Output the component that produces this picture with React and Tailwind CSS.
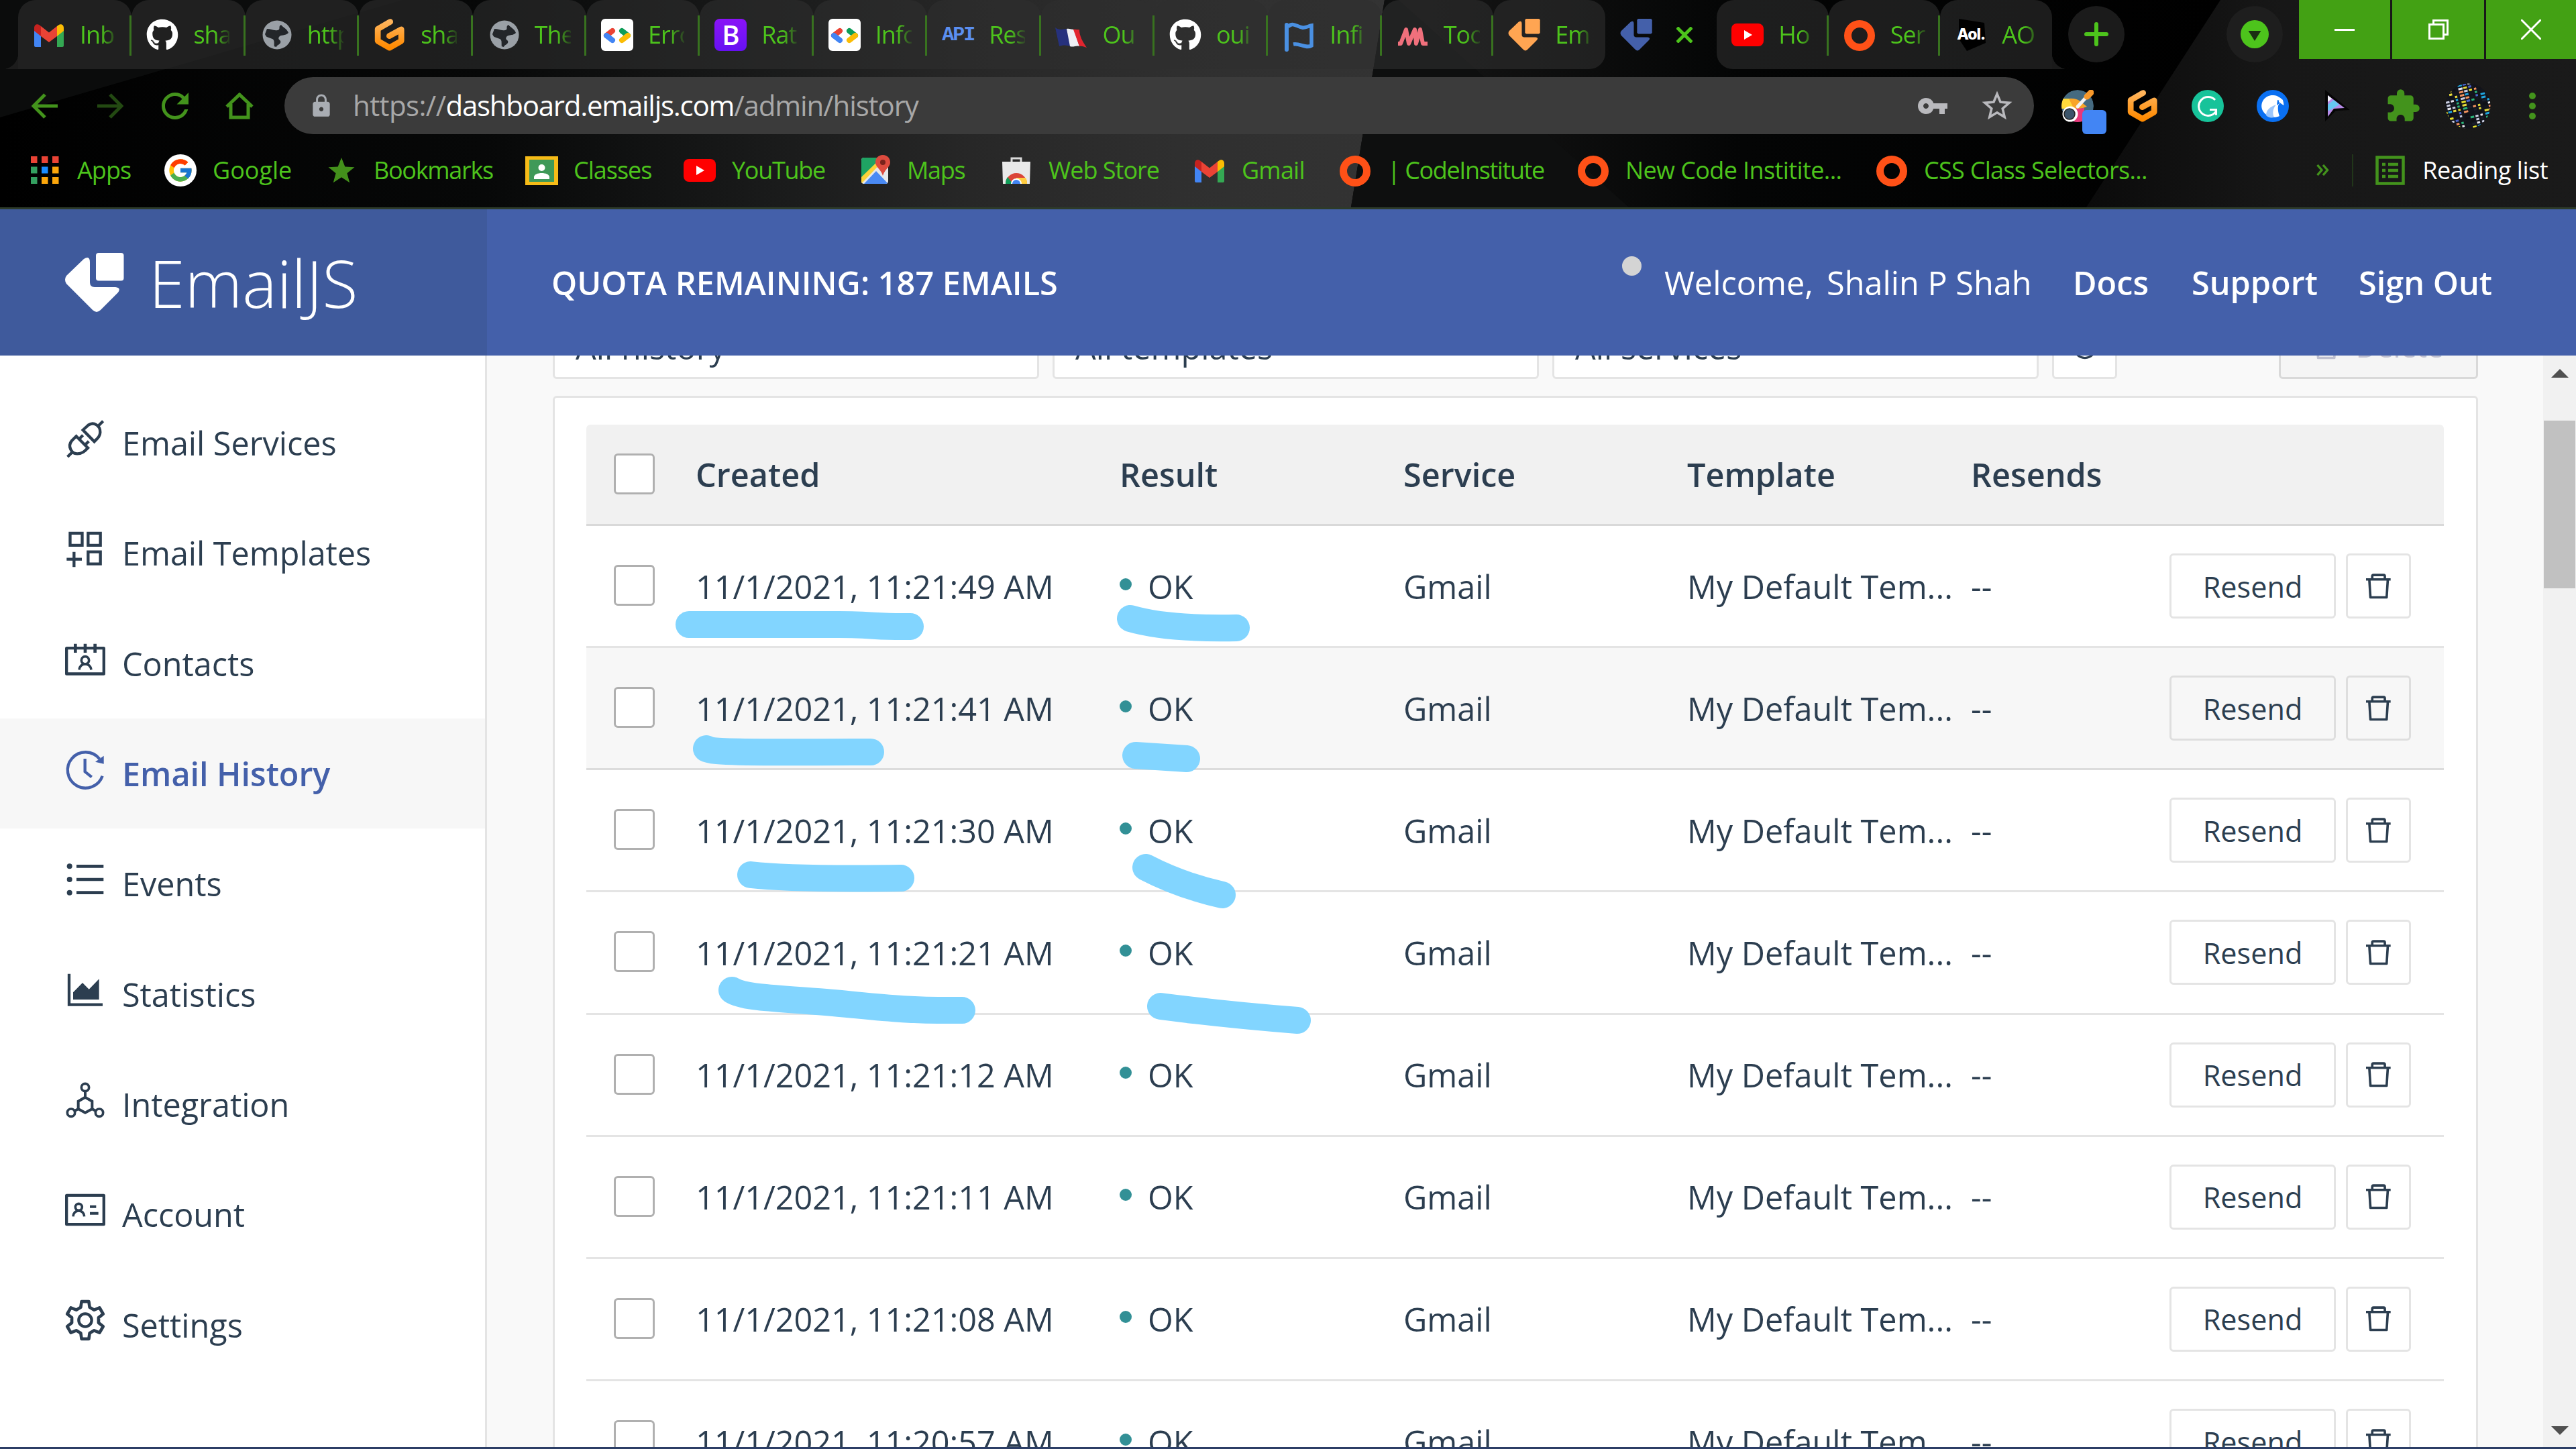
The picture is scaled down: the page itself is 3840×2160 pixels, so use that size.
import React from "react";
import { FaGithub } from "react-icons/fa";
import { FcGoogle } from "react-icons/fc";
import { AiOutlineReload } from "react-icons/ai";
import { MdRefresh, MdVpnKey, MdStarBorder, MdExtension, MdLock } from "react-icons/md";

/* ---------- favicons (48 x 48) ---------- */

const Svg = ({ children, box = "0 0 48 48", cls = "size-12" }) => (
  <svg viewBox={box} className={`${cls} shrink-0 overflow-visible`} fill="none">{children}</svg>
);

const Gmail = () => (
  <Svg>
    <path d="M2 12v28a2 2 0 0 0 2 2h8V21L2 13z" fill="#4285f4" />
    <path d="M46 12v28a2 2 0 0 1-2 2h-8V21l10-8z" fill="#34a853" />
    <path d="M36 11l2-1.500c4-3 8-.5 8 4V18l-10 8z" fill="#fbbc04" />
    <path d="M12 26V11l12 9.500L36 11v15l-12 9z" fill="#ea4335" />
    <path d="M2 18v-4.500c0-4.500 4-7 8-4l2 1.500v15z" fill="#c5221f" />
  </Svg>
);
const Github = () => <FaGithub className="size-12 shrink-0 text-white" />;
const Globe = () => (
  <Svg>
    <circle cx="25" cy="24" r="21.500" fill="#9aa0a6" />
    <path d="M10 15c6 0 9 3 16 2 5-1 0-6 5-8 3 4 9 6 11 12-5 5-11 2-14 6-3 5 4 4 2 9-2 3-5 3-6 6l-4-1c0-5 1-8-3-9-5-1-8-5-10-9z" fill="#23262a" />
    <path d="M7 26l11 4c4 2 2 6 3 12C13 40 8 34 7 26zM27 9c-3-1-6 0-7 4 4 2 8 0 7-4z" fill="#9aa0a6" />
  </Svg>
);
const Gitpod = () => (
  <Svg box="360 98 148 148">
    <defs>
      <linearGradient id="gp" x1="0" y1="0" x2="0" y2="1">
        <stop offset="0" stopColor="#ffb45b" /><stop offset="1" stopColor="#ff8a00" />
      </linearGradient>
    </defs>
    <path d="M436 112L379 145V200L433 231L487 200V147L432 177" stroke="url(#gp)" strokeWidth="27" strokeLinecap="round" strokeLinejoin="round" />
  </Svg>
);
const DevSite = () => (
  <Svg>
    <rect width="48" height="48" rx="6" fill="#fff" />
    <g strokeWidth="8" strokeLinecap="round">
      <path d="M17 18l-9 7" stroke="#ea4335" />
      <path d="M8 25l9 7" stroke="#4285f4" />
      <path d="M31 18l9 7" stroke="#0f9d58" />
      <path d="M40 25l-9 7" stroke="#fbbc04" />
    </g>
  </Svg>
);
const Bootstrap = () => (
  <span className="flex size-12 shrink-0 items-center justify-center rounded-lg bg-linear-to-b from-[#8a12f7] to-[#6610f2] text-[40px] leading-none font-semibold text-white">B</span>
);
const ApiMark = () => (
  <span className="flex size-12 shrink-0 items-center justify-center font-['Liberation_Mono',monospace] text-[30px] leading-none font-bold tracking-[-2px] text-[#5b8ff0]">API</span>
);
const FrenchFlag = () => (
  <Svg>
    <path d="M-1 13c5 4 11 3 17 2l6 26c-6-2-12-2-17 0z" fill="#26317d" />
    <path d="M16 15c4-1 7 1 11 1l8 25c-4-2-9 2-14 0z" fill="#eef0f5" />
    <path d="M26 16c3-1 6 1 9 0 0 10 5 18 11 27-4-1-7-3-11-2z" fill="#e2252f" />
  </Svg>
);
const BlueFlag = () => (
  <Svg>
    <path d="M6 46V9" stroke="#4a90e2" strokeWidth="6" strokeLinecap="round" />
    <path d="M8 12c7-8 13 0 21 1 5 1 9-2 14-3v30c-9 5-17-4-27-2" stroke="#4a90e2" strokeWidth="5.500" />
  </Svg>
);
const PinkM = () => (
  <Svg><path d="M2 37h4l8-21 4 21 9-21 2 21 6-21 4 21h7" stroke="#f0707c" strokeWidth="6" strokeLinejoin="round" /></Svg>
);
const EmailLogo = ({ cls, fill }) => (
  <svg viewBox="96 377 89 89" className={`${cls} shrink-0`} fill={fill}>
    <rect x="143" y="377" width="41.500" height="41.500" rx="4" />
    <path d="M125 386Q134 380 134 391V421Q134 428 141 428H172Q181 429 176 436L150 462Q144 468 138 462L99 423Q95 417 99 411Z" />
  </svg>
);
const OrangeMark = () => <EmailLogo cls="size-12" fill="#ffa552" />;
const BlueMark = () => <EmailLogo cls="size-12" fill="#4460aa" />;
const Youtube = () => (
  <Svg>
    <rect x="0" y="7" width="48" height="34" rx="8" fill="#ff0000" />
    <path d="M19 17v14l12-7z" fill="#fff" />
  </Svg>
);
const Ring = () => <Svg><circle cx="24" cy="25" r="17.500" stroke="#ff5117" strokeWidth="11" /></Svg>;
const Aol = () => (
  <span className="relative flex size-12 shrink-0 items-center justify-center">
    <svg viewBox="0 0 48 48" className="absolute inset-0 size-12"><path d="M6 0l38 6 2 30-28 12L6 30z" fill="#000" /></svg>
    <span className="relative font-['Inter',sans-serif] text-[23px] leading-none font-extrabold tracking-[-1px] text-white">Aol.</span>
  </span>
);
const AppsGrid = () => (
  <Svg>
    {["#ea4335", "#ea4335", "#ea4335", "#34a060", "#1a8cff", "#fba60b", "#34a060", "#fba60b", "#fba60b"].map((c, i) => (
      <rect key={i} x={3 + (i % 3) * 16} y={3 + Math.floor(i / 3) * 15.5} width="9.500" height="10" fill={c} />
    ))}
  </Svg>
);
const Google = () => (
  <span className="flex size-12 shrink-0 items-center justify-center rounded-full bg-white"><FcGoogle className="size-10" /></span>
);
const Star = () => (
  <Svg><path d="M24 5l5.300 13.500 14.200.7-11.100 9 3.800 14L24 34.200 11.800 42.200l3.800-14-11.100-9 14.200-.7z" fill="#43901b" /></Svg>
);
const Classroom = () => (
  <Svg>
    <rect x="0" y="3" width="49" height="43" fill="#f6bb17" />
    <rect x="6" y="8" width="37" height="33" fill="#3f9958" />
    <circle cx="24.500" cy="20" r="5" fill="#fff" />
    <path d="M13 34c0-8 23-8 23 0v3H13z" fill="#fff" />
  </Svg>
);
const Maps = () => (
  <Svg>
    <defs><clipPath id="mp"><rect x="4" y="5" width="40" height="39" rx="4" /></clipPath></defs>
    <g clipPath="url(#mp)">
      <rect x="4" y="5" width="40" height="39" fill="#e6e8ea" />
      <path d="M4 5h30L4 36z" fill="#1fa463" />
      <path d="M8 44l18-19 18 19z" fill="#4a8af4" />
      <path d="M4 34l30-29h7L4 44z" fill="#fdd23a" />
    </g>
    <path d="M36 1c7 0 11 5 11 11 0 7-8 10-11 20-3-10-11-13-11-20C25 6 29 1 36 1z" fill="#dd4b3e" />
    <circle cx="36" cy="12" r="4" fill="#7a231c" />
  </Svg>
);
const WebStore = () => (
  <Svg>
    <path d="M17 12V6h14v6" stroke="#dadada" strokeWidth="3" />
    <path d="M3 11h42l-1 33H4z" fill="#e9e9e9" />
    <path d="M8 44a16 16 0 0 1 32 0z" fill="#db4437" />
    <path d="M8 44a16 16 0 0 1 3-10l8 10z" fill="#0f9d58" />
    <path d="M40 44a16 16 0 0 0-2-9H24v9z" fill="#ffcd40" />
    <path d="M16 44a8 8 0 1 1 16 0z" fill="#fff" />
    <path d="M18 44a6 6 0 1 1 12 0z" fill="#4285f4" />
  </Svg>
);

/* ---------- browser chrome ---------- */

const TABS = [
  [Gmail, "Inb"], [Github, "sha"], [Globe, "http"], [Gitpod, "sha"], [Globe, "The"], [DevSite, "Erro"],
  [Bootstrap, "Rat"], [DevSite, "Info"], [ApiMark, "Res"], [FrenchFlag, "Ou"], [Github, "oui"], [BlueFlag, "Infi"],
];
const TABS_END = [[PinkM, "Too"], [OrangeMark, "Em"]];
const TABS_AFTER = [[Youtube, "Ho"], [Ring, "Ser"], [Aol, "AO"]];

function Tab({ Icon, label, width, shape = "", sep = true }) {
  return (
    <div className={`relative flex h-[103px] shrink-0 items-center rounded-t-[26px] bg-[#2f2f2f]/60 pl-[22px] ${width} ${shape}`}>
      <Icon />
      <span className="ml-[22px] w-[54px] overflow-hidden text-[36px] leading-[50px] tracking-[-1px] whitespace-nowrap text-[#4dc41c] [mask-image:linear-gradient(to_right,black_60%,rgb(0_0_0/0.15))]">{label}</span>
      {sep && <span className="absolute top-[23px] right-0 h-[60px] w-[3px] bg-[#38721f]" />}
    </div>
  );
}

function WindowButtons() {
  return (
    <div className="flex h-[88px] w-[413px] shrink-0 gap-[3px]">
      <div className="flex w-[136px] items-center justify-center bg-[#43a114]"><span className="h-[3px] w-[30px] bg-white" /></div>
      <div className="flex w-[137px] items-center justify-center bg-[#43a114]">
        <svg viewBox="0 0 30 30" className="size-[30px]" fill="none" stroke="#fff" strokeWidth="3">
          <path d="M1.500 7.500h21v21h-21zM7.500 7.500v-6h21v21h-6" />
        </svg>
      </div>
      <div className="flex flex-1 items-center justify-center bg-[#43a114]">
        <svg viewBox="0 0 30 30" className="size-[30px]" stroke="#fff" strokeWidth="3"><path d="M0 0l30 30M30 0L0 30" /></svg>
      </div>
    </div>
  );
}

function TabStrip() {
  return (
    <div className="flex h-[103px] items-start">
      <div className="h-[103px] w-[27px] shrink-0 pt-[79px] pl-[3px]">
        <div className="size-6 bg-[radial-gradient(circle_at_0_0,transparent_24px,#1c1c1c_24.500px)]" />
      </div>
      {TABS.map(([Icon, label], i) => <Tab key={i} Icon={Icon} label={label} width="w-[169.4px]" />)}
      {TABS_END.map(([Icon, label], i) => (
        <Tab key={i} Icon={Icon} label={label} width="w-[166.5px]" sep={i === 0} shape={i === 1 ? "rounded-br-[24px]" : ""} />
      ))}
      <div className="flex h-[103px] w-[166.5px] shrink-0 items-center pl-[22px]">
        <BlueMark />
        <svg viewBox="0 0 24 24" className="ml-[36px] size-6" stroke="#4dc41c" strokeWidth="5"><path d="M1 1l22 22M23 1L1 23" /></svg>
      </div>
      {TABS_AFTER.map(([Icon, label], i) => (
        <Tab key={i} Icon={Icon} label={label} width="w-[166.5px]" sep={i < 2} shape={i === 0 ? "rounded-bl-[24px]" : ""} />
      ))}
      <div className="mt-[79px] size-6 shrink-0 bg-[radial-gradient(circle_at_100%_0,transparent_24px,#1a1a1a_24.500px)]" />
      <div className="mt-[9px] flex size-[84px] shrink-0 items-center justify-center rounded-full bg-[#1b1b1b]">
        <svg viewBox="0 0 36 36" className="size-9" stroke="#4dc41c" strokeWidth="6" strokeLinecap="round"><path d="M18 3v30M3 18h30" /></svg>
      </div>
      <div className="mt-[9px] ml-[152px] flex size-[84px] shrink-0 items-center justify-center rounded-full bg-[#1e1e1e]">
        <span className="flex size-[42px] items-center justify-center rounded-full bg-[#4dc41c]">
          <svg viewBox="0 0 20 16" className="mt-1 h-[15px] w-[20px]" fill="#1a2f12"><path d="M0 0h20l-10 16z" /></svg>
        </span>
      </div>
      <div className="flex-1" />
      <WindowButtons />
    </div>
  );
}

const ColorPick = () => (
  <span className="relative size-12 shrink-0">
    <svg viewBox="0 0 48 48" className="size-12" fill="none">
      <defs><clipPath id="cp"><circle cx="24" cy="24" r="24" /></clipPath></defs>
      <g clipPath="url(#cp)">
        <circle cx="24" cy="24" r="24" fill="#456a80" />
        <path d="M2 13h17l5 15H0V20z" fill="#ffd93b" />
        <path d="M11 13q10-1 17 4l10 8-18 6z" fill="#f8a428" />
        <path d="M22 28l12-1v21H18z" fill="#e8387a" />
      </g>
      <circle cx="13" cy="36" r="11.500" fill="#fff" />
      <circle cx="12" cy="36" r="8" fill="#3c556b" stroke="#222" strokeWidth="1.500" />
      <path d="M24 25L36 12" stroke="#f3f3f3" strokeWidth="5" strokeLinecap="round" />
      <path d="M38 10l6-6" stroke="#f8992b" strokeWidth="9" strokeLinecap="round" />
    </svg>
    <span className="absolute top-[30px] left-[31px] size-[36px] rounded-[6px] bg-[#4285f4]" />
  </span>
);
const Grammarly = () => (
  <Svg>
    <circle cx="24" cy="24" r="24" fill="#17c39a" />
    <path d="M35 15A14 14 0 1 0 37 31M27 29.500h9.500v8" stroke="#fff" strokeWidth="3" />
  </Svg>
);
const Hawk = () => (
  <Svg>
    <circle cx="24" cy="24" r="24" fill="#0a70f2" />
    <path d="M9 31C3 18 14 7 25 8c7 0 9 4 14 8l2 7c-4-4-8-4-9 1s1 13 2 15c-8 4-20 1-25-8z" fill="#fff" />
    <path d="M31 15l-1 8 4-3 7 3c-3-5-5-7-10-8z" fill="#0a70f2" />
    <path d="M33 18l7 5-1-8-5-4z" fill="#fff" />
    <path d="M14 38c0-8 6-13 15-16-5 6-6 13-3 19-5 1-9 0-12-3z" fill="#9cc6fb" />
  </Svg>
);
const Cursor = () => (
  <Svg>
    <path d="M5 0v47l16-16 21-1z" fill="#050505" />
    <path d="M9 8v32l9-12 16-1z" fill="#b78be8" />
    <path d="M9 22l9-7 8 7-15 9-2-1z" fill="#65c7f2" />
    <path d="M9 8l6 5-6 5z" fill="#f4f4fb" />
  </Svg>
);

const AVATAR_COLORS = ["#c9cde0", "#15171f", "#e8e32a", "#1b1f2c", "#4a63c8", "#0f1015", "#f2925e", "#e8e8f0", "#2bb57a", "#1fa6e0", "#14161d", "#e8dc3a", "#12131a"];
const Avatar = () => (
  <svg viewBox="0 0 68 68" className="size-[68px] shrink-0">
    <defs><clipPath id="av"><circle cx="34" cy="34" r="33.500" /></clipPath></defs>
    <g clipPath="url(#av)">
      <rect width="68" height="68" fill="#12141c" />
      <g transform="rotate(-14 34 34)">
        {Array.from({ length: 216 }, (_, i) => (
          <rect key={i} x={-12 + (i % 12) * 7.6} y={-10 + Math.floor(i / 12) * 5} width={3.5 + ((i * 7) % 4)} height="3" fill={AVATAR_COLORS[(i * 5 + Math.floor(i / 12) * 3 + ((i * i) % 7)) % 13]} />
        ))}
      </g>
    </g>
  </svg>
);

function Toolbar() {
  return (
    <div className="flex h-[109px] items-center">
      <svg viewBox="0 0 40 38" className="ml-[47px] h-[38px] w-10 shrink-0" fill="none" stroke="#43931c" strokeWidth="5"><path d="M39 19H4M20 2L3 19l17 17" /></svg>
      <svg viewBox="0 0 40 38" className="ml-[57px] h-[38px] w-10 shrink-0" fill="none" stroke="#234912" strokeWidth="5"><path d="M1 19h35M20 2l17 17-17 17" /></svg>
      <MdRefresh className="ml-[47px] size-[60px] shrink-0 text-[#43931c]" />
      <svg viewBox="0 0 42 40" className="ml-[45px] h-10 w-[42px] shrink-0" fill="none" stroke="#43931c" strokeWidth="5"><path d="M2 21L21 3l19 18M8 17v20h26V17" /></svg>
      <div className="ml-[46px] flex h-[85px] w-[2608px] shrink-0 items-center rounded-full bg-[#3b3b3b] pl-[36px]">
        <MdLock className="size-[38px] shrink-0 text-[#a9adb3]" />
        <div className="mb-[2px] ml-[28px] flex text-[42px] leading-[60px] text-[#a8a8a8]">
          <span className="tracking-[-0.6px]">https://</span>
          <span className="tracking-[-1.25px] text-white">dashboard.emailjs.com</span>
          <span className="tracking-[-1.1px]">/admin/history</span>
        </div>
        <div className="flex-1" />
        <MdVpnKey className="size-12 shrink-0 text-[#b9b9bd]" />
        <MdStarBorder className="mr-[28px] ml-[45px] size-[54px] shrink-0 text-[#b9b9bd]" />
      </div>
      <div className="ml-[41px] flex items-center gap-[49px]">
        <ColorPick /><Gitpod /><Grammarly /><Hawk /><Cursor />
      </div>
      <MdExtension className="ml-[46px] size-[54px] shrink-0 text-[#43931c]" />
      <div className="ml-[36px]"><Avatar /></div>
      <div className="ml-[57px] flex flex-col gap-[5px]">
        {[0, 1, 2].map((i) => <span key={i} className="size-[10px] rounded-full bg-[#43931c]" />)}
      </div>
    </div>
  );
}

const BOOKMARKS = [
  [AppsGrid, "Apps", "w-[202px]", "tracking-[-0.9px]"],
  [Google, "Google", "w-[240px]", "tracking-[0px]"],
  [Star, "Bookmarks", "w-[298px]", "tracking-[-1.3px]"],
  [Classroom, "Classes", "w-[236px]", "tracking-[-1px]"],
  [Youtube, "YouTube", "w-[261px]", "tracking-[-1.3px]"],
  [Maps, "Maps", "w-[211px]", "tracking-[-1.3px]"],
  [WebStore, "Web Store", "w-[288px]", "tracking-[-1px]"],
  [Gmail, "Gmail", "w-[217px]", "tracking-[-0.8px]"],
  [Ring, "| CodeInstitute", "w-[355px]", "tracking-[-1.4px]"],
  [Ring, "New Code Institite...", "w-[445px]", "tracking-[-0.6px]"],
  [Ring, "CSS Class Selectors...", "w-[410px]", "tracking-[-0.7px]"],
];

function BookmarksBar() {
  return (
    <div className="flex h-[97px] items-center pb-[14px] pl-[43px] text-[36px] leading-[50px] whitespace-nowrap text-[#4dc41c]">
      {BOOKMARKS.map(([Icon, label, width, tracking]) => (
        <div key={label} className={`flex shrink-0 items-center ${width}`}>
          <Icon />
          <span className={`ml-[24px] ${tracking}`}>{label}</span>
        </div>
      ))}
      <div className="flex-1" />
      <svg viewBox="0 0 20 18" className="h-[17px] w-5 shrink-0" fill="none" stroke="#43931c" strokeWidth="3.500"><path d="M2 1l7 8-7 8M11 1l7 8-7 8" /></svg>
      <span className="ml-[34px] h-12 w-[2px] bg-[#21361a]" />
      <svg viewBox="0 0 44 44" className="ml-[33px] size-11 shrink-0" fill="none" stroke="#43931c" strokeWidth="4.500">
        <path d="M2.500 2.500h39v39h-39z" /><path d="M10 13h5M19 13h15M10 22h5M19 22h15M10 31h5M19 31h15" />
      </svg>
      <span className="mr-[42px] ml-[26px] tracking-[-0.5px] text-white">Reading list</span>
    </div>
  );
}

function ThemeBackdrop() {
  return (
    <svg viewBox="0 0 3840 309" className="absolute inset-0 h-[309px] w-[3840px]" preserveAspectRatio="none">
      <defs>
        <linearGradient id="bgA" x1="0" x2="1"><stop offset="0" stopColor="#000" /><stop offset=".35" stopColor="#070808" /><stop offset=".55" stopColor="#191a1a" /><stop offset=".7" stopColor="#272727" /><stop offset=".85" stopColor="#2f2f2f" /><stop offset="1" stopColor="#333" /></linearGradient>
        <linearGradient id="bgB" x1="0" x2="1"><stop offset="0" stopColor="#181818" /><stop offset=".45" stopColor="#040505" /><stop offset="1" stopColor="#000" /></linearGradient>
        <linearGradient id="bgC" x1="0" x2="1"><stop offset="0" stopColor="#0b0b0b" /><stop offset=".4" stopColor="#171717" /><stop offset="1" stopColor="#1a1a1a" /></linearGradient>
      </defs>
      <rect width="3840" height="309" fill="#000" />
      <path d="M0 0H2064L2014 309H0z" fill="url(#bgA)" />
      <path d="M0 0H600L0 175z" fill="#0b0c0c" />
      <path d="M2064 0H3310L3110 309H2014z" fill="url(#bgB)" />
      <path d="M2064 0H2085L2428 309H2014z" fill="#0e0f0f" />
      <path d="M3310 0H3840V309H3110z" fill="url(#bgC)" />
    </svg>
  );
}

/* ---------- sidebar ---------- */

const NavSvg = ({ children }) => (
  <svg viewBox="0 0 180 180" className="size-[60px] overflow-visible" fill="none" stroke="currentColor" strokeWidth="13">{children}</svg>
);
const PlugIcon = () => (
  <NavSvg>
    <path d="M11 168l22-22M50 76L30 96c-20 24-2 60 26 58 20 0 30-10 46-26zM60 91l20-20M86 118l20-20M80 48l24-22c24-16 54 2 53 32 0 16-8 24-26 42zM148 30l22-22" />
  </NavSvg>
);
const TemplatesIcon = () => (
  <NavSvg><path d="M22.500 17.500h54v54h-54zM103 17.500h55v54h-55zM103 101h55v54h-55zM7 134h68M40 101v68" /></NavSvg>
);
const ContactsIcon = () => (
  <NavSvg>
    <rect x="6.500" y="36.500" width="167" height="115" rx="1" />
    <path d="M46 17v40M90 17v40M134 17v40" strokeWidth="14" />
    <circle cx="90" cy="91" r="17" strokeWidth="11" />
    <path d="M63 133c3-18 14-25 27-25s24 7 27 25" strokeWidth="11" />
  </NavSvg>
);
const HistoryIcon = () => (
  <NavSvg>
    <path d="M167 116A80 80 0 1 1 154 40" />
    <path d="M89 39v58l30 24" />
    <path d="M173 26v36l-38-9z" fill="currentColor" stroke="none" />
  </NavSvg>
);
const EventsIcon = () => (
  <NavSvg>
    <path d="M51 28h121M51 87h121M51 146h121" strokeWidth="14" />
    {[28, 87, 146].map((y) => <circle key={y} cx="20" cy={y} r="12" fill="currentColor" stroke="none" />)}
  </NavSvg>
);
const StatsIcon = () => (
  <NavSvg>
    <path d="M18 14v138h150" />
    <path d="M36 129V97l42-43 29 29 45-46v92z" fill="currentColor" stroke="none" />
  </NavSvg>
);
const IntegrationIcon = () => (
  <NavSvg>
    <path d="M90 47v25M61 125l-18 10M119 125l18 10" strokeWidth="12" />
    <path d="M90 74l31 18v34l-31 17-31-17V92z" strokeWidth="12" />
    <circle cx="90" cy="30" r="17" strokeWidth="11" /><circle cx="27" cy="143" r="17" strokeWidth="11" /><circle cx="153" cy="143" r="17" strokeWidth="11" />
  </NavSvg>
);
const AccountIcon = () => (
  <NavSvg>
    <rect x="6.500" y="20.500" width="167" height="130" rx="1" />
    <circle cx="61" cy="73" r="15" strokeWidth="11" />
    <path d="M36 115c2-18 12-25 25-25s23 7 25 25" strokeWidth="11" />
    <path d="M111 71h28M111 101h38" strokeWidth="12" />
  </NavSvg>
);

/* six teeth, one every 60 degrees */
const GEAR = [0, 60, 120, 180, 240, 300]
  .flatMap((a) => [[a - 19, 61], [a - 11, 85], [a + 11, 85], [a + 19, 61]])
  .map(([deg, r]) => {
    const t = ((deg - 90) * Math.PI) / 180;
    return `${(90 + r * Math.cos(t)).toFixed(1)},${(84 + r * Math.sin(t)).toFixed(1)}`;
  })
  .join(" ");
const SettingsIcon = () => (
  <NavSvg>
    <polygon points={GEAR} strokeLinejoin="round" strokeWidth="14" />
    <circle cx="90" cy="84" r="29" />
  </NavSvg>
);

const NAV = [
  ["Email Services", PlugIcon], ["Email Templates", TemplatesIcon], ["Contacts", ContactsIcon], ["Email History", HistoryIcon],
  ["Events", EventsIcon], ["Statistics", StatsIcon], ["Integration", IntegrationIcon], ["Account", AccountIcon], ["Settings", SettingsIcon],
];

function Sidebar() {
  return (
    <nav className="w-[726px] shrink-0 border-r-3 border-[#e4e4e4] bg-white pt-[48px]">
      {NAV.map(([label, Icon]) => {
        const active = label === "Email History";
        return (
          <div key={label} className={`flex h-[164.3px] items-center pl-[97px] ${active ? "bg-[#f7f7f7] font-semibold text-[#4460aa]" : "text-[#2c3e50]"}`}>
            <span className="mb-[10px]"><Icon /></span>
            <span className="ml-[25px] leading-[66px] tracking-[-0.05px]">{label}</span>
          </div>
        );
      })}
    </nav>
  );
}

/* ---------- history table ---------- */

const TIMES = ["11:21:49", "11:21:41", "11:21:30", "11:21:21", "11:21:12", "11:21:11", "11:21:08", "11:20:57"];

const Checkbox = () => <span className="mb-[2px] ml-[41px] block size-[61px] rounded-[6px] border-3 border-[#b0b0b0] bg-white" />;

const Trash = ({ cls }) => (
  <svg viewBox="0 0 112 114" className={`${cls} shrink-0`} fill="none" stroke="currentColor" strokeWidth="11" strokeLinejoin="round">
    <path d="M0 26h111M28 24V12q0-6 6-6h45q6 0 6 6v12M15 30l5 77h73l5-77" />
  </svg>
);

function HistoryTable() {
  return (
    <div className="mt-[25px] h-[1700px] w-[2870px] rounded-[6px] border-3 border-[#e4e4e4] bg-white pt-[40px] pr-[48px] pl-[47px]">
      <div className="grid h-[151px] grid-cols-[163px_632px_423px_423px_423px_296px_auto] items-center rounded-t-[6px] border-b-3 border-[#d9d9d9] bg-[#f1f1f1] font-semibold">
        <Checkbox />
        <span>Created</span><span>Result</span><span>Service</span><span>Template</span><span>Resends</span><span />
      </div>
      {TIMES.map((t, i) => (
        <div key={t} className={`grid h-[182.15px] grid-cols-[163px_632px_423px_423px_423px_296px_auto] items-center border-b-3 ${i === 1 ? "border-[#dcdcdc] bg-[#f7f7f7]" : "border-[#e4e4e4]"}`}>
          <Checkbox />
          <span className="tracking-[-0.05px]">11/1/2021, {t} AM</span>
          <span className="flex items-center">
            <span className="mr-[24px] mb-[6px] size-[18px] rounded-full bg-[#329096]" />OK
          </span>
          <span>Gmail</span>
          <span>My Default Tem...</span>
          <span>--</span>
          <div className="flex gap-[15px]">
            <span className={`flex h-[97px] w-[248px] items-center justify-center rounded-[6px] border-3 pt-[2px] text-[43.2px] ${i === 1 ? "border-[#dedede]" : "border-[#e4e4e4]"}`}>Resend</span>
            <span className={`flex h-[97px] w-[97px] items-center justify-center rounded-[6px] border-3 ${i === 1 ? "border-[#dedede]" : "border-[#e4e4e4]"}`}>
              <Trash cls="h-[38px] w-[37px]" />
            </span>
          </div>
        </div>
      ))}
    </div>
  );
}

function Filters() {
  const box = "flex h-[96px] shrink-0 items-center rounded-[6px] border-3 border-[#e4e4e4] bg-white";
  return (
    <div className="-mt-[61px] flex w-[2870px] leading-[66px]">
      <div className={`${box} w-[725px] pl-[31px]`}>All history</div>
      <div className={`${box} ml-[20px] w-[725px] pl-[31px]`}>All templates</div>
      <div className={`${box} ml-[20px] w-[725px] pl-[31px]`}>All services</div>
      <div className={`${box} ml-[20px] w-[97px] justify-center`}><AiOutlineReload className="size-[43px]" /></div>
      <div className="flex-1" />
      <div className="flex h-[96px] w-[297px] items-center justify-center rounded-[6px] border-3 border-[#d9d9d9] bg-[#f5f5f5] text-[43.2px] text-[#bfc0cf]">
        <Trash cls="mr-[26px] h-[38px] w-[37px]" />Delete
      </div>
    </div>
  );
}

const MARKS = [
  "M1027 931H1250C1300 931 1310 935 1357 934",
  "M1685 922Q1740 938 1843 936",
  "M1053 1116C1065 1123 1150 1121 1298 1121",
  "M1693 1126L1769 1131",
  "M1119 1304Q1180 1311 1343 1309",
  "M1708 1293Q1760 1320 1822 1334",
  "M1091 1476C1110 1488 1160 1488 1231 1494S1340 1507 1434 1506",
  "M1730 1500Q1830 1513 1934 1521",
];

function Header() {
  return (
    <header className="flex h-[218px] text-white">
      <div className="flex w-[726px] shrink-0 items-center bg-[#3f5a9c] pl-[96px]">
        <EmailLogo cls="size-[89px]" fill="#fff" />
        <span className="ml-[37px] text-[97px] leading-[120px] font-light">EmailJS</span>
      </div>
      <div className="flex flex-1 items-center bg-[#4460aa] pl-[96px]">
        <span className="font-semibold">QUOTA REMAINING: 187 EMAILS</span>
        <div className="flex-1" />
        <span className="mr-[34px] mb-[50px] size-[29px] rounded-full bg-[#d4d4d4]" />
        <span className="w-[242px]">Welcome,</span>
        <span className="w-[367px]">Shalin P Shah</span>
        <span className="w-[177px] font-semibold">Docs</span>
        <span className="w-[249px] font-semibold">Support</span>
        <span className="w-[324px] font-semibold">Sign Out</span>
      </div>
    </header>
  );
}

export default function App() {
  return (
    <div className="relative flex h-[2160px] w-[3840px] flex-col overflow-hidden bg-[#f9f9f9] font-['Open_Sans','Noto_Sans',sans-serif]">
      <div className="relative h-[312px] shrink-0 border-b-3 border-[#2d3b2a] bg-black">
        <ThemeBackdrop />
        <div className="relative">
          <TabStrip />
          <Toolbar />
          <BookmarksBar />
        </div>
      </div>
      <div className="flex h-[1845px] shrink-0 flex-col text-[48.6px] leading-[66px] whitespace-nowrap text-[#2c3e50]">
        <Header />
        <div className="flex h-[1627px] overflow-hidden">
          <Sidebar />
          <main className="flex flex-1 flex-col overflow-hidden pl-[98px]">
            <Filters />
            <HistoryTable />
          </main>
          <div className="flex w-[49px] shrink-0 flex-col items-center bg-[#f1f1f1]">
            <svg viewBox="0 0 26 13" className="mt-[20px] h-[13px] w-[26px]" fill="#505050"><path d="M0 13L13 0l13 13z" /></svg>
            <span className="mt-[64px] h-[250px] w-[47px] bg-[#c1c1c1]" />
            <div className="flex-1" />
            <svg viewBox="0 0 26 13" className="mb-[18px] h-[13px] w-[26px]" fill="#505050"><path d="M0 0l13 13L26 0z" /></svg>
          </div>
        </div>
      </div>
      <div className="h-[3px] shrink-0 bg-[#2c3e66]" />
      <svg viewBox="0 0 3840 2160" className="absolute inset-0 h-[2160px] w-[3840px]" fill="none" stroke="#82d5ff" strokeWidth="40" strokeLinecap="round">
        {MARKS.map((d) => <path key={d} d={d} />)}
      </svg>
    </div>
  );
}
